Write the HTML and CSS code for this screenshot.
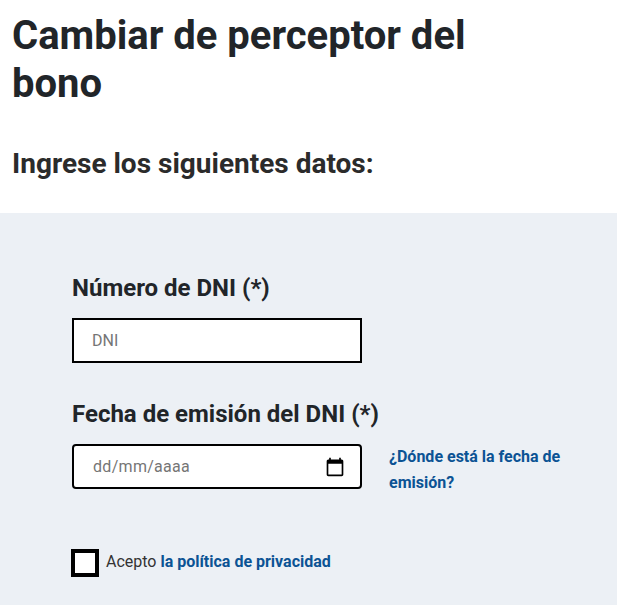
FILE: index.html
```html
<!DOCTYPE html>
<html lang="es">
<head>
    <meta charset="UTF-8">
    <title>Cambiar de perceptor del bono</title>
    <link rel="stylesheet" href="styles.css">
</head>
<body>
    <div class="page-header">
        <h1 class="page-title">Cambiar de perceptor del bono</h1>
        <h2 class="page-subtitle">Ingrese los siguientes datos:</h2>
    </div>
    <form class="form-panel">
        <label class="field-label" for="dni">Número de DNI (*)</label>
        <input class="text-input" id="dni" type="text" placeholder="DNI">

        <label class="field-label date-label" for="fecha">Fecha de emisión del DNI (*)</label>
        <div class="date-row">
            <div class="date-input" id="fecha">
                <span class="date-text">dd/mm/aaaa</span>
                <svg class="date-icon" viewBox="0 0 24 24" xmlns="http://www.w3.org/2000/svg">
                    <path d="M20 3h-1V1h-2v2H7V1H5v2H4c-1.1 0-2 .9-2 2v16c0 1.1.9 2 2 2h16c1.1 0 2-.9 2-2V5c0-1.1-.9-2-2-2zm0 18H4V8h16v13z"></path>
                </svg>
            </div>
            <a class="help-link" href="#">¿Dónde está la fecha de emisión?</a>
        </div>

        <div class="privacy-row">
            <span class="checkbox"></span>
            <span class="privacy-text">Acepto <a href="#">la política de privacidad</a></span>
        </div>
    </form>
</body>
</html>
```

FILE: styles.css
```css
* {
    margin: 0;
    padding: 0;
    box-sizing: border-box;
    font-family: Roboto, sans-serif;
}

body {
    background-color: white;
    color: #212529;
    overflow: hidden;
}

.page-header {
    padding: 12px 12px 0;
    height: 213px;
}

.page-title {
    max-width: 500px;
    font-size: 40px;
    line-height: 48px;
    font-weight: 700;
}

.page-subtitle {
    margin-top: 40px;
    font-size: 28px;
    line-height: 32px;
    font-weight: 700;
    color: #2b2b2b;
}

.form-panel {
    background-color: #ecf0f5;
    padding: 60px 0 0 72px;
    height: 392px;
}

.field-label {
    display: block;
    font-size: 24px;
    line-height: 30px;
    font-weight: 700;
}

.text-input {
    display: block;
    width: 290px;
    height: 45px;
    margin-top: 15px;
    padding: 0 18px;
    border: 2px solid black;
    background-color: white;
    font-size: 16px;
    outline: none;
}

.text-input::placeholder {
    color: #757575;
}

.date-label {
    margin-top: 36px;
}

.date-row {
    display: flex;
    align-items: flex-start;
    margin-top: 14px;
}

.date-input {
    display: flex;
    flex: none;
    align-items: center;
    justify-content: space-between;
    width: 290px;
    height: 45px;
    margin-top: 1px;
    padding: 0 15px 0 19px;
    border: 2px solid black;
    border-radius: 4px;
    background-color: white;
}

.date-text {
    font-size: 16px;
    letter-spacing: 0.3px;
    color: #757575;
}

.date-icon {
    width: 20px;
    height: 20px;
}

.help-link {
    width: 190px;
    margin-top: 1px;
    margin-left: 27px;
    font-size: 16px;
    line-height: 26px;
    font-weight: 700;
    color: #0b5394;
    text-decoration: none;
}

.privacy-row {
    display: flex;
    align-items: center;
    margin-top: 53px;
    margin-left: -1px;
}

.checkbox {
    width: 28px;
    height: 28px;
    border: 4px solid black;
    background-color: white;
}

.privacy-text {
    margin-left: 7px;
    margin-bottom: 4px;
    font-size: 16px;
    color: #333;
}

.privacy-text a {
    font-weight: 700;
    color: #0b5394;
    text-decoration: none;
}
```
